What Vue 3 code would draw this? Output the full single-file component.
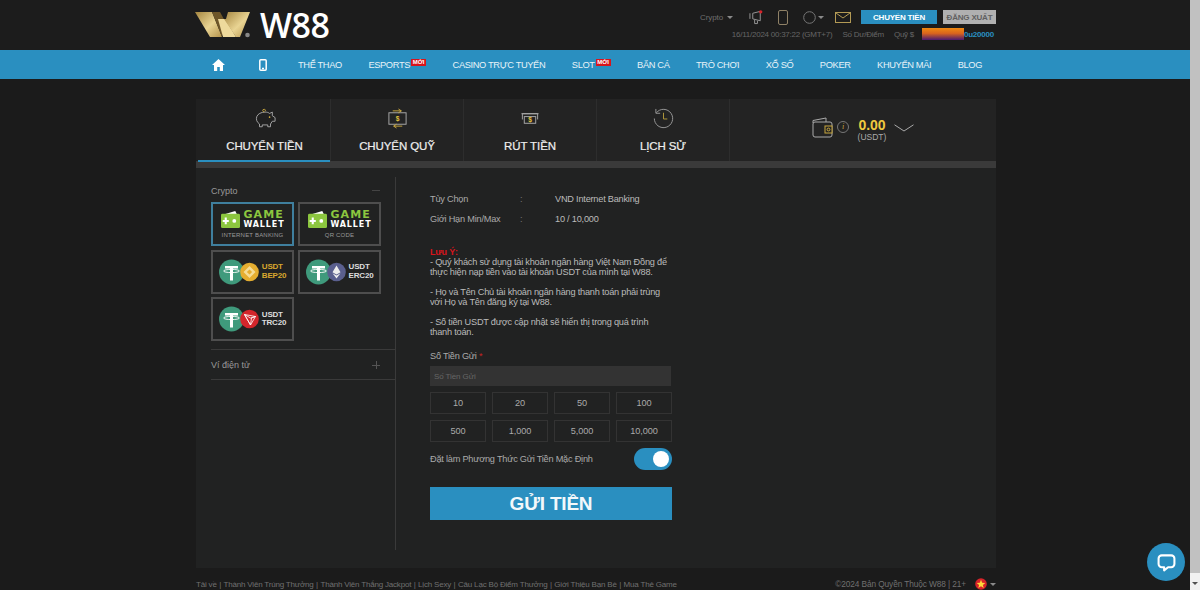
<script setup>
const navItems = [
  { label: 'THỂ THAO' },
  { label: 'ESPORTS', badge: true },
  { label: 'CASINO TRỰC TUYẾN' },
  { label: 'SLOT', badge: true },
  { label: 'BẮN CÁ' },
  { label: 'TRÒ CHƠI' },
  { label: 'XỔ SỐ' },
  { label: 'POKER' },
  { label: 'KHUYẾN MÃI' },
  { label: 'BLOG' }
]
const amounts = ['10', '20', '50', '100', '500', '1,000', '5,000', '10,000']
const notes = [
  '- Quý khách sử dụng tài khoản ngân hàng Việt Nam Đồng để thực hiện nạp tiền vào tài khoản USDT của mình tại W88.',
  '- Họ và Tên Chủ tài khoản ngân hàng thanh toán phải trùng với Họ và Tên đăng ký tại W88.',
  '- Số tiền USDT được cập nhật sẽ hiển thị trong quá trình thanh toán.'
]
const footerLinks = ['Tải về', 'Thành Viên Trúng Thưởng', 'Thành Viên Thắng Jackpot', 'Lịch Sexy', 'Câu Lạc Bộ Điểm Thưởng', 'Giới Thiệu Bạn Bè', 'Mua Thẻ Game']
const usdtCards = [
  { id: 'bep', net: 'BEP20', color: '#e5ae30', textClass: 'gold' },
  { id: 'erc', net: 'ERC20', color: '#5a5f8e', textClass: '' },
  { id: 'trc', net: 'TRC20', color: '#d3262c', textClass: '' }
]
</script>

<template>
  <div class="screen">
    <div class="page">
      <header class="top">
        <div class="wrap top-inner">
          <div class="logo">
            <svg width="56" height="26" viewBox="0 0 56 26">
              <defs>
                <linearGradient id="au" x1="0" y1="0" x2="1" y2="1">
                  <stop offset="0" stop-color="#a4853f" />
                  <stop offset=".55" stop-color="#e9d493" />
                  <stop offset="1" stop-color="#b4934c" />
                </linearGradient>
              </defs>
              <polygon points="0,0 17,0 27,25 15,25" fill="url(#au)" />
              <polygon points="17,0 25,0 31,11 27,25" fill="#6e5628" />
              <polygon points="23,7 30,7 41,25 28,25" fill="#eeda9c" />
              <polygon points="33,0 55,0 45,25 41,25 29,7 31,7" fill="url(#au)" />
              <circle cx="52.5" cy="23" r="2.3" fill="#888" />
            </svg>
            <span class="logo-text">W88</span>
          </div>
          <div class="top-right">
            <div class="top-row">
              <span class="crypto">Crypto</span><i class="caret crypto-caret"></i>
              <svg class="ic speaker" width="15" height="16" viewBox="0 0 16 16" fill="none" stroke="#9a9a9a">
                <path d="M1 4v6M4 4l8-2v10l-8-2zM6 11v4h3v-3" />
                <circle cx="12.5" cy="2.5" r="1.8" fill="#d8232a" stroke="none" />
              </svg>
              <svg class="ic phone" width="10" height="15" viewBox="0 0 10 15" fill="none" stroke="#8f8166">
                <rect x=".5" y=".5" width="9" height="14" rx="1.5" />
              </svg>
              <svg class="ic globe" width="13" height="13" viewBox="0 0 13 13" fill="none" stroke="#777">
                <circle cx="6.5" cy="6.5" r="5.8" />
              </svg>
              <i class="caret globe-caret"></i>
              <svg class="ic mail" width="16" height="11" viewBox="0 0 16 11" fill="none" stroke="#b39a55">
                <rect x=".5" y=".5" width="15" height="10" />
                <path d="M1 1l7 5 7-5" />
              </svg>
              <button class="btn-deposit">CHUYỂN TIỀN</button>
              <button class="btn-logout">ĐĂNG XUẤT</button>
            </div>
            <div class="info-row">
              <span class="time">16/11/2024 00:37:22 (GMT+7)</span>
              <span class="score">Số Dư/Điểm</span>
              <span class="fund">Quỹ $</span>
              <span class="mask"></span>
              <span class="user">0u20000</span>
            </div>
          </div>
        </div>
      </header>

      <nav class="nav">
        <div class="wrap nav-inner">
          <svg class="nav-home" width="13" height="12" viewBox="0 0 13 12" fill="#fff">
            <path d="M6.5 0L0 6h2v6h3.2V8h2.6v4H11V6h2z" />
          </svg>
          <svg class="nav-phone" width="8" height="12" viewBox="0 0 8 12" fill="none" stroke="#fff" stroke-width="1.5">
            <rect x=".8" y=".8" width="6.4" height="10.4" rx="1" />
            <path d="M3 9.6h2" />
          </svg>
          <span v-for="item in navItems" :key="item.label" class="nav-item">
            {{ item.label }}<b v-if="item.badge" class="badge">MỚI</b>
          </span>
        </div>
      </nav>

      <main class="wrap panel">
        <div class="tabs">
          <div class="tab active">
            <svg width="22" height="21" viewBox="0 0 24 22" fill="none" stroke="#aaa">
              <path d="M3 9c1-3 5-5 9-5 2 0 4 .5 5 1.5L20 4v4l3 2v4h-3l-2 3v3h-3v-2H9v2H6v-3c-3-2-4-5-3-8z" />
              <circle cx="17" cy="9.5" r=".9" fill="#d6b23f" stroke="none" />
              <path d="M11 4c-2-1-2-3 0-3s2 2 .5 2" stroke="#c9a83f" />
            </svg>
            <span>CHUYỂN TIỀN</span>
          </div>
          <div class="tab">
            <svg width="21" height="21" viewBox="0 0 22 22" fill="none" stroke="#aaa">
              <rect x="2" y="5" width="18" height="12" />
              <path d="M6 3h9M12 1l3 2-3 2M16 19H7M10 17l-3 2 3 2" stroke="#c9a83f" />
              <text x="11" y="14" class="dollar" text-anchor="middle">$</text>
            </svg>
            <span>CHUYỂN QUỸ</span>
          </div>
          <div class="tab">
            <svg width="20" height="21" viewBox="0 0 20 22" fill="none" stroke="#aaa">
              <path d="M2 12V6h16v6" />
              <path d="M1 6h18" />
              <rect x="4" y="9" width="12" height="7" />
              <text x="10" y="15" class="dollar" text-anchor="middle">$</text>
            </svg>
            <span>RÚT TIỀN</span>
          </div>
          <div class="tab">
            <svg width="21" height="21" viewBox="0 0 22 22" fill="none" stroke="#999">
              <path d="M3.5 5A9.6 9.6 0 1 1 1.4 11" />
              <path d="M3 1v4.5h4.5" />
              <path d="M11 5v6.5h4" stroke="#b39a3c" />
            </svg>
            <span>LỊCH SỬ</span>
          </div>
          <div class="balance">
            <svg width="21" height="21" viewBox="0 0 21 21" fill="none" stroke="#aaa">
              <path d="M1 6V3.5L14 1v4" />
              <rect x="1" y="5" width="19" height="15" rx="2" />
              <rect x="13" y="9" width="7" height="7" fill="#232323" stroke="#c9a83f" />
              <circle cx="16.5" cy="12.5" r="1.4" stroke="#c9a83f" />
            </svg>
            <span class="info-dot">i</span>
            <div class="amount">
              <strong>0.00</strong>
              <small>(USDT)</small>
            </div>
            <svg class="chev" width="20" height="8" viewBox="0 0 20 8" fill="none" stroke="#aaa">
              <path d="M.5 .8L10 7l9.5-6.2" />
            </svg>
          </div>
        </div>
        <div class="tab-bar"></div>

        <div class="content">
          <aside class="side">
            <div class="group-head">
              <span>Crypto</span>
              <i class="minus"></i>
            </div>
            <div class="cards">
              <div class="card selected">
                <div class="gw">
                  <svg width="23" height="19" viewBox="0 0 22 20">
                    <path d="M3 5L16 1l2 4z" fill="#fff" />
                    <rect x="1" y="4" width="20" height="15" rx="1.5" fill="#8cc63f" />
                    <path d="M6 8v7M2.8 11.5h6.4" stroke="#fff" stroke-width="2.2" />
                    <circle cx="15" cy="11.5" r="2" fill="#fff" />
                  </svg>
                  <div class="gw-text"><b>GAME</b><em>WALLET</em></div>
                </div>
                <span class="gw-sub">INTERNET BANKING</span>
              </div>
              <div class="card">
                <div class="gw">
                  <svg width="23" height="19" viewBox="0 0 22 20">
                    <path d="M3 5L16 1l2 4z" fill="#fff" />
                    <rect x="1" y="4" width="20" height="15" rx="1.5" fill="#8cc63f" />
                    <path d="M6 8v7M2.8 11.5h6.4" stroke="#fff" stroke-width="2.2" />
                    <circle cx="15" cy="11.5" r="2" fill="#fff" />
                  </svg>
                  <div class="gw-text"><b>GAME</b><em>WALLET</em></div>
                </div>
                <span class="gw-sub">QR CODE</span>
              </div>
              <div v-for="c in usdtCards" :key="c.id" class="card usdt" :class="c.id">
                <svg width="41" height="26" viewBox="0 0 41 26">
                  <circle cx="12.5" cy="13" r="12.5" fill="#3f9a7c" />
                  <path d="M6 7h13v2.6h-5v12h-3v-12H6z" fill="#fff" />
                  <ellipse cx="12.5" cy="12" rx="8" ry="1.6" fill="none" stroke="#fff" stroke-width=".9" />
                  <circle cx="30.5" cy="13" r="9.3" :fill="c.color" />
                  <path v-if="c.id === 'bep'" d="M30.5 7l6 6-6 6-6-6zM30.5 10.4l-2.6 2.6 2.6 2.6 2.6-2.6z" fill="#f4dc96" fill-rule="evenodd" />
                  <path v-if="c.id === 'erc'" d="M30.5 6.5l4 6.7-4 2.3-4-2.3zM26.5 14.2l4 2.3 4-2.3-4 5.3z" fill="#eee" />
                  <path v-if="c.id === 'trc'" d="M25.5 8.5l11 2-5 8.5zM25.5 8.5l6 10.5 1-7 4-1.5-5 1.5z" fill="none" stroke="#fff" stroke-width=".8" />
                </svg>
                <div class="usdt-text" :class="c.textClass"><span>USDT</span><span>{{ c.net }}</span></div>
              </div>
            </div>
            <div class="group-head wallet">
              <span>Ví điện tử</span>
              <i class="plus"></i>
            </div>
          </aside>

          <section class="form">
            <dl class="meta">
              <dt>Tùy Chọn</dt><dd class="colon">:</dd><dd>VND Internet Banking</dd>
              <dt>Giới Hạn Min/Max</dt><dd class="colon">:</dd><dd>10 / 10,000</dd>
            </dl>
            <div class="note">
              <strong>Lưu Ý:</strong>
              <p v-for="n in notes" :key="n">{{ n }}</p>
            </div>
            <label class="field-label">Số Tiền Gửi <i>*</i></label>
            <input class="amount-input" placeholder="Số Tiền Gửi" />
            <div class="amounts">
              <button v-for="a in amounts" :key="a">{{ a }}</button>
            </div>
            <div class="default-row">
              <span>Đặt làm Phương Thức Gửi Tiền Mặc Định</span>
              <span class="toggle"><i></i></span>
            </div>
            <button class="submit">GỬI TIỀN</button>
          </section>
        </div>
      </main>

      <footer class="wrap foot">
        <div class="foot-links">
          <template v-for="(l, i) in footerLinks" :key="l">
            <span v-if="i" class="sep">|</span><span>{{ l }}</span>
          </template>
        </div>
        <div class="foot-right">
          <span>©2024 Bản Quyền Thuộc W88 | 21+</span>
          <svg width="12" height="12" viewBox="0 0 12 12">
            <circle cx="6" cy="6" r="5.8" fill="#d8232a" />
            <polygon points="6,1.8 7.2,4.8 10.3,4.9 7.9,6.9 8.7,10 6,8.2 3.3,10 4.1,6.9 1.7,4.9 4.8,4.8" fill="#ffd83a" />
          </svg>
          <i class="caret"></i>
        </div>
      </footer>

      <div class="chat">
        <svg width="24" height="24" viewBox="0 0 24 24" fill="none" stroke="#fff" stroke-width="2.6">
          <path d="M6 3h12a4 4 0 0 1 4 4v7a4 4 0 0 1-4 4h-4l-5 4v-4H6a4 4 0 0 1-4-4V7a4 4 0 0 1 4-4z" stroke-linejoin="round" />
        </svg>
      </div>
    </div>
    <div class="scrollbar">
      <div class="thumb"></div>
      <i class="arrow"></i>
    </div>
  </div>
</template>

<style>
html, body { margin: 0; background: #1a1a1a; overflow: hidden; }
</style>

<style scoped>
.screen {
  display: flex;
  width: 1200px;
  height: 590px;
  overflow: hidden;
  background: #1b1b1b;
  font-family: "Liberation Sans", Arial, sans-serif;
  color: #bbb;
}
.page { position: relative; flex: 1; min-width: 0; display: flex; flex-direction: column; }
.wrap { width: 800px; margin-left: 196px; box-sizing: border-box; }
svg { flex: none; }

.scrollbar { width: 10px; background: #f1f1f1; display: flex; flex-direction: column; align-items: center; position: relative; }
.thumb { width: 100%; height: 573px; background: #c1c1c1; }
.arrow { margin-top: 9px; border: 3px solid transparent; border-top: 3px solid #505050; border-bottom: 0; }

.top { height: 50px; background: #1c1c1c; flex: none; }
.top-inner { display: flex; justify-content: space-between; height: 50px; }
.logo { display: flex; align-items: center; gap: 9px; margin-left: -1px; }
.logo-text { color: #fff; font-size: 34px; font-weight: 600; font-family: "Open Sans", sans-serif; letter-spacing: -.6px; }

.top-right { display: flex; flex-direction: column; align-items: flex-end; padding-top: 10px; }
.top-row { display: flex; align-items: center; height: 14px; }
.crypto { font-size: 8px; color: #6f6f6f; letter-spacing: -.1px; }
.caret { display: inline-block; border: 3px solid transparent; border-top: 3px solid #8a8a8a; border-bottom: 0; }
.crypto-caret { margin-left: 4px; }
.speaker { margin-left: 16px; }
.phone { margin-left: 14px; }
.globe { margin-left: 15px; }
.globe-caret { margin-left: 2px; }
.mail { margin-left: 11px; }
.btn-deposit, .btn-logout {
  border: 0; height: 14px; padding: 0; font: 700 8px "Liberation Sans", sans-serif; letter-spacing: -.2px;
}
.btn-deposit { width: 76px; margin-left: 10px; background: #2a8fc0; color: #fff; }
.btn-logout { width: 53px; margin-left: 6px; background: #b0b0b0; color: #606060; }
.info-row { display: flex; align-items: center; height: 16px; margin-top: 2px; font-size: 8px; color: #666; letter-spacing: -.25px; }
.score { margin-left: 10px; }
.fund { margin-left: 10px; }
.mask { width: 42px; height: 12px; margin-left: 8px; background: linear-gradient(#f08a10 0%, #d9641e 45%, #4a1a70 100%); }
.user { width: 32px; color: #2a8fc0; font-weight: 700; }

.nav { height: 29px; background: #2a8fc0; flex: none; }
.nav-inner { display: flex; align-items: center; height: 29px; padding-left: 16px; }
.nav-home { margin-right: 34px; }
.nav-phone { margin-right: 31px; }
.nav-item { display: flex; align-items: center; color: #e8f3f8; font-size: 9.3px; margin-right: 26.5px; letter-spacing: -.37px; white-space: nowrap; }
.badge { margin: -5px 0 0 1px; background: #d8141c; color: #fff; font-size: 6px; line-height: 7px; width: 15px; letter-spacing: 0; text-align: center; }

.panel { margin-top: 20px; height: 469px; background: #212222; display: flex; flex-direction: column; flex: none; }
.tabs { display: flex; height: 62px; flex: none; }
.tab {
  position: relative; width: 133px; box-sizing: border-box; border-right: 1px solid #2d2d2d;
  display: flex; flex-direction: column; align-items: center; padding-top: 9px; background: #232323;
}
.tab.active { width: 135px; padding-left: 3px; background: #202020; }
.tab.active::after { content: ""; position: absolute; left: 2px; right: 0; bottom: -1px; height: 2px; background: #2a8fc0; }
.tab span { margin-top: 10px; line-height: 14px; color: #eee; font-size: 11.5px; letter-spacing: -.1px; -webkit-text-stroke: .2px #eee; white-space: nowrap; }
.dollar { font: 700 7px "Liberation Sans", sans-serif; fill: #e3c23f; stroke: none; }
.balance { flex: 1; display: flex; align-items: center; padding-left: 82px; padding-bottom: 6px; background: #232323; }
.info-dot { width: 10px; height: 10px; border: 1px solid #777; border-radius: 50%; margin-left: 4px; font: italic 8px/10px "Liberation Serif", serif; color: #c9a83f; text-align: center; }
.amount { display: flex; flex-direction: column; align-items: center; width: 26px; margin: 5px 9px 0 10px; }
.amount strong { color: #f0c93f; font-size: 14px; line-height: 15px; white-space: nowrap; }
.amount small { color: #aaa; font-size: 8.5px; line-height: 9px; white-space: nowrap; }
.chev { margin-top: 2px; }
.tab-bar { height: 7px; background: #3a3a3a; flex: none; }

.content { display: flex; flex: 1; padding-top: 9px; padding-bottom: 18px; min-height: 0; }
.side { width: 200px; box-sizing: border-box; border-right: 1px solid #3a3a3a; padding-left: 15px; flex: none; }
.group-head { display: flex; justify-content: space-between; align-items: center; font-size: 9px; color: #999; height: 25px; padding-top: 2px; box-sizing: border-box; padding-right: 15px; }
.minus { width: 8px; height: 1px; background: #444; }
.plus { width: 8px; height: 8px; background: linear-gradient(#555,#555) center/8px 1px no-repeat, linear-gradient(#555,#555) center/1px 8px no-repeat; }
.cards { display: grid; grid-template-columns: 83px 83px; column-gap: 4px; row-gap: 3.5px; padding-bottom: 8px; border-bottom: 1px solid #3a3a3a; }
.card { box-sizing: border-box; height: 44px; border: 2px solid #4e4e4e; display: flex; flex-direction: column; align-items: center; justify-content: center; }
.card.selected { border-color: #3f7f9e; }
.gw { display: flex; align-items: center; gap: 1px; height: 20px; margin-left: -1px; }
.gw-text { display: flex; flex-direction: column; font-family: "DejaVu Sans", sans-serif; }
.gw-text b { color: #8cc63f; font-size: 11px; font-weight: 700; letter-spacing: 1.1px; line-height: 10px; }
.gw-text em { color: #fff; font-size: 8px; font-style: normal; font-weight: 700; letter-spacing: .9px; line-height: 9px; }
.gw-sub { color: #9a9a9a; font-size: 6px; line-height: 7px; margin-top: 2px; letter-spacing: .2px; }
.usdt { flex-direction: row; }
.usdt-text { display: flex; flex-direction: column; font: 700 8px/8.5px "Liberation Sans", sans-serif; letter-spacing: -.2px; color: #ddd; margin-left: 2px; }
.usdt-text.gold { color: #d9a82e; }
.wallet { height: 30px; padding-top: 1px; border-bottom: 1px solid #3a3a3a; }

.form { width: 242px; margin-left: 34px; font-size: 9.2px; letter-spacing: -.22px; color: #bbb; }
.meta { display: grid; grid-template-columns: 90px 35px 1fr; grid-auto-rows: 20px; align-items: center; margin: 12px 0 0; }
.meta dd { margin: 0; }
.meta dt { color: #aaa; }
.colon { color: #777; }
.note { margin-top: 18px; line-height: 10px; width: 240px; color: #bbb; }
.note strong { display: block; color: #d8141c; font-size: 9px; }
.note p { margin: 0 0 10px; }
.field-label { display: block; margin-top: 14px; line-height: 10px; color: #aaa; }
.field-label i { color: #c22; font-style: normal; }
.amount-input { display: block; box-sizing: border-box; width: 241px; height: 20px; margin-top: 5px; padding: 0 4px; background: #333; border: 0; font: 8px "Liberation Sans", sans-serif; letter-spacing: -.1px; }
.amount-input::placeholder { color: #666; }
.amounts { display: grid; grid-template-columns: repeat(4, 56px); column-gap: 6px; row-gap: 6px; margin-top: 6px; }
.amounts button { height: 22px; padding: 0; background: transparent; border: 1px solid #333; color: #aaa; font: 9.2px "Liberation Sans", sans-serif; letter-spacing: -.1px; }
.default-row { display: flex; justify-content: space-between; align-items: center; height: 22px; margin-top: 6px; color: #aaa; }
.toggle { width: 38px; height: 22px; border-radius: 11px; background: #2a8fc0; position: relative; }
.toggle i { position: absolute; right: 3px; top: 3px; width: 16px; height: 16px; border-radius: 50%; background: #fff; }
.submit { display: block; width: 242px; height: 33px; margin-top: 17px; background: #2a8fc0; color: #f2f8fb; border: 0; font: 700 19px "Liberation Sans", sans-serif; letter-spacing: -.2px; }

.foot { display: flex; justify-content: space-between; align-items: center; height: 22px; padding-top: 10px; flex: none; color: #707070; }
.foot-links { display: flex; font-size: 8px; letter-spacing: -.19px; white-space: nowrap; }
.sep { margin: 0 2.5px; }
.foot-right { display: flex; align-items: center; font-size: 8.3px; letter-spacing: -.1px; white-space: nowrap; }
.foot-right svg { margin: 0 3px 0 9px; }

.chat { position: absolute; left: 1147px; top: 543px; width: 38px; height: 38px; border-radius: 50%; background: #2a8fc0; display: flex; align-items: center; justify-content: center; }
.chat svg { width: 19px; height: 19px; }
</style>
